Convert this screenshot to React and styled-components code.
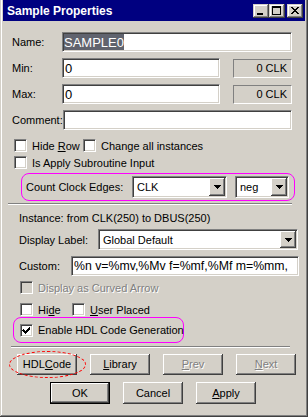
import React from 'react';
import styled, { createGlobalStyle, css } from 'styled-components';

const GlobalStyle = createGlobalStyle`
  html, body { margin: 0; padding: 0; background: #d4d0c8; }
  body { font-family: "Liberation Sans", Arial, sans-serif; font-size: 11px; color: #000; }
  * { box-sizing: border-box; }
`;

const sunken = css`
  border: 1px solid;
  border-color: #808080 #ffffff #ffffff #808080;
  box-shadow: inset 1px 1px #404040, inset -1px -1px #d4d0c8;
`;

const raised = css`
  box-shadow: inset -1px -1px #404040, inset 1px 1px #ffffff, inset -2px -2px #808080, inset 2px 2px #d4d0c8;
`;

const Window = styled.div`
  width: 308px;
  height: 417px;
  background: #d4d0c8;
  padding: 0 3px 3px 3px;
  display: flex;
  flex-direction: column;
  overflow: hidden;
  box-shadow: inset -1px -1px #404040, inset 1px 0 #d4d0c8, inset -2px -2px #808080, inset 2px 0 #ffffff;
`;

const TitleBar = styled.div`
  height: 21px;
  flex-shrink: 0;
  background: #000080;
  display: flex;
  align-items: center;
  padding: 0 2px;
  color: #fff;
  font-weight: bold;
  font-size: 12px;
`;

const Title = styled.div`
  flex: 1;
  padding-left: 2px;
`;

const CaptionButton = styled.div`
  width: 16px;
  height: 14px;
  background: #d4d0c8;
  margin-left: ${p => p.$gap || 0}px;
  box-shadow: inset -1px -1px #404040, inset 1px 1px #d4d0c8, inset -2px -2px #808080, inset 2px 2px #ffffff;
  svg { display: block; }
`;

const Section = styled.div`
  display: flex;
  flex-direction: column;
  margin-top: ${p => p.$mt || 0}px;
  padding-left: ${p => p.$pl || 0}px;
  padding-right: ${p => p.$pr || 0}px;
  gap: ${p => p.$gap || 0}px;
`;

const FieldRow = styled.div`
  display: flex;
  align-items: center;
  height: ${p => p.$h || 20}px;
  margin-top: ${p => p.$mt || 0}px;
`;

const FieldLabel = styled.label`
  width: ${p => p.$w || 50}px;
  flex-shrink: 0;
  white-space: nowrap;
`;

const TextBox = styled.div`
  ${sunken};
  background: #fff;
  height: 20px;
  width: ${p => (p.$w ? `${p.$w}px` : 'auto')};
  flex: ${p => (p.$w ? '0 0 auto' : '1')};
  display: flex;
  align-items: stretch;
  padding: 1px 1px 1px 2px;
  font-size: ${p => p.$fs || 13}px;
  white-space: nowrap;
  overflow: hidden;
  span { display: flex; align-items: center; }
`;

const Selected = styled.span`
  background: #60636e;
  color: #fff;
  margin-left: -1px;
`;

const StaticBox = styled.div`
  width: 59px;
  height: 19px;
  margin-left: 13px;
  border: 1px solid;
  border-color: #808080 #ffffff #ffffff #808080;
  display: flex;
  align-items: center;
  justify-content: flex-end;
  padding-right: 4px;
`;

const CheckRow = styled.div`
  display: flex;
  align-items: center;
  height: 13px;
  margin-top: ${p => p.$mt || 0}px;
  padding-left: ${p => p.$pl || 0}px;
`;

const Check = styled.div`
  display: flex;
  align-items: center;
  gap: 5px;
  width: ${p => (p.$w ? `${p.$w}px` : 'auto')};
  white-space: nowrap;
  color: ${p => (p.$disabled ? '#808080' : '#000')};
  text-shadow: ${p => (p.$disabled ? '1px 1px #fff' : 'none')};
`;

const Box = styled.span`
  ${sunken};
  width: 13px;
  height: 13px;
  flex-shrink: 0;
  background: ${p => (p.$disabled ? '#d4d0c8' : '#fff')};
  display: flex;
  align-items: center;
  justify-content: center;
`;

const Highlight = styled.div`
  border: 1px solid #ff00ff;
  border-radius: 8px;
  margin-top: ${p => p.$mt}px;
  margin-left: ${p => p.$ml}px;
  width: ${p => p.$w}px;
  height: ${p => p.$h}px;
  padding-left: ${p => p.$pl}px;
  display: flex;
  align-items: center;
`;

const Select = styled.div`
  ${sunken};
  background: #fff;
  height: ${p => p.$h || 21}px;
  width: ${p => p.$w}px;
  margin-left: ${p => p.$ml || 0}px;
  flex-shrink: 0;
  display: flex;
  align-items: stretch;
  padding: 1px;
`;

const SelectText = styled.span`
  flex: 1;
  display: flex;
  align-items: center;
  padding-left: 3px;
  white-space: nowrap;
`;

const DropButton = styled.span`
  width: 16px;
  background: #d4d0c8;
  ${raised};
  display: flex;
  align-items: center;
  justify-content: center;
`;

const Separator = styled.div`
  height: 2px;
  border-top: 1px solid #808080;
  border-bottom: 1px solid #ffffff;
  margin-top: ${p => p.$mt}px;
  margin-left: ${p => p.$ml}px;
  width: ${p => p.$w}px;
`;

const InfoText = styled.div`
  margin-top: ${p => p.$mt}px;
  padding-left: ${p => p.$pl}px;
  line-height: 13px;
`;

const ButtonRow = styled.div`
  display: flex;
  gap: 13px;
  margin-top: ${p => p.$mt}px;
  padding-left: ${p => p.$pl}px;
`;

const Button = styled.div`
  position: relative;
  width: 60px;
  height: ${p => p.$h || 21}px;
  background: #d4d0c8;
  display: flex;
  align-items: center;
  justify-content: center;
  padding-bottom: 1px;
  ${raised};
  color: ${p => (p.$disabled ? '#808080' : '#000')};
  text-shadow: ${p => (p.$disabled ? '1px 1px #fff' : 'none')};
  ${p => p.$default && css`
    border: 1px solid #000;
  `}
`;

const Ellipse = styled.span`
  position: absolute;
  left: -8px;
  top: -3px;
  width: 77px;
  height: 27px;
  border: 1px dashed #ff0000;
  border-radius: 50%;
  pointer-events: none;
`;

function Arrow() {
  return (
    <svg width="7" height="4" viewBox="0 0 7 4" shapeRendering="crispEdges">
      <path d="M0 0h7v1h-1v1h-1v1h-1v1h-1v-1h-1v-1h-1v-1h-1z" fill="#000" />
    </svg>
  );
}

function Tick() {
  return (
    <svg width="9" height="9" viewBox="0 0 9 9" shapeRendering="crispEdges">
      <path d="M1 3h1v1h1v1h1v-1h1v-1h1v-1h1v-1h1v3h-1v1h-1v1h-1v1h-1v1h-1v-1h-1v-1h-1v-1h-1z" fill="#000" />
    </svg>
  );
}

function CheckBox({ label, checked, disabled, w }) {
  return (
    <Check $w={w} $disabled={disabled}>
      <Box $disabled={disabled}>{checked && <Tick />}</Box>
      <span>{label}</span>
    </Check>
  );
}

function Dropdown({ value, w, h, ml }) {
  return (
    <Select $w={w} $h={h} $ml={ml}>
      <SelectText>{value}</SelectText>
      <DropButton><Arrow /></DropButton>
    </Select>
  );
}

export default function App() {
  return (
    <>
      <GlobalStyle />
      <Window>
        <TitleBar>
          <Title>Sample Properties</Title>
          <CaptionButton>
            <svg width="16" height="14" viewBox="0 0 16 14" shapeRendering="crispEdges">
              <rect x="4" y="9" width="6" height="2" fill="#000" />
            </svg>
          </CaptionButton>
          <CaptionButton>
            <svg width="16" height="14" viewBox="0 0 16 14" shapeRendering="crispEdges">
              <path d="M3 2h9v9h-9z M4 4v6h7v-6z" fill="#000" fillRule="evenodd" />
            </svg>
          </CaptionButton>
          <CaptionButton $gap={2}>
            <svg width="16" height="14" viewBox="0 0 16 14" shapeRendering="crispEdges">
              <path d="M4 3h2v1h1v1h2v-1h1v-1h2v1h-1v1h-1v1h-1v1h1v1h1v1h1v1h-2v-1h-1v-1h-2v1h-1v1h-2v-1h1v-1h1v-1h1v-1h-1v-1h-1v-1h-1z" fill="#000" />
            </svg>
          </CaptionButton>
        </TitleBar>

        <Section $mt={11} $pl={9} $pr={13} $gap={6}>
          <FieldRow>
            <FieldLabel>Name:</FieldLabel>
            <TextBox><Selected>SAMPLE0</Selected></TextBox>
          </FieldRow>
          <FieldRow>
            <FieldLabel>Min:</FieldLabel>
            <TextBox $w={158}><span>0</span></TextBox>
            <StaticBox>0 CLK</StaticBox>
          </FieldRow>
          <FieldRow>
            <FieldLabel>Max:</FieldLabel>
            <TextBox $w={158}><span>0</span></TextBox>
            <StaticBox>0 CLK</StaticBox>
          </FieldRow>
          <FieldRow>
            <FieldLabel $w={51}>Comment:</FieldLabel>
            <TextBox />
          </FieldRow>
        </Section>

        <CheckRow $mt={9} $pl={11}>
          <CheckBox w={69} label={<>Hide <u>R</u>ow</>} />
          <CheckBox label="Change all instances" />
        </CheckRow>
        <CheckRow $mt={4} $pl={11}>
          <CheckBox label="Is Apply Subroutine Input" />
        </CheckRow>

        <Highlight $mt={4} $ml={18} $w={274} $h={28} $pl={4}>
          <FieldLabel $w={106}>Count Clock Edges:</FieldLabel>
          <Dropdown value="CLK" w={95} h={22} />
          <Dropdown value="neg" w={54} h={22} ml={8} />
        </Highlight>

        <Separator $mt={2} $ml={5} $w={284} />

        <InfoText $mt={7} $pl={16}>Instance: from CLK(250) to DBUS(250)</InfoText>

        <Section $pl={16}>
          <FieldRow $mt={4} $h={21}>
            <FieldLabel $w={79}>Display Label:</FieldLabel>
            <Dropdown value="Global Default" w={200} h={21} />
          </FieldRow>
          <FieldRow $mt={6}>
            <FieldLabel $w={52}>Custom:</FieldLabel>
            <TextBox $w={228} $fs={12.3}><span>%n v=%mv,%Mv f=%mf,%Mf m=%mm,</span></TextBox>
          </FieldRow>
        </Section>

        <CheckRow $mt={5} $pl={17}>
          <CheckBox disabled label="Display as Curved Arrow" />
        </CheckRow>
        <CheckRow $mt={9} $pl={17}>
          <CheckBox w={52} label={<>Hi<u>d</u>e</>} />
          <CheckBox label={<><u>U</u>ser Placed</>} />
        </CheckRow>

        <Highlight $mt={1} $ml={10} $w={171} $h={26} $pl={6}>
          <CheckBox checked label="Enable HDL Code Generation" />
        </Highlight>

        <Separator $mt={3} $ml={8} $w={279} />

        <ButtonRow $mt={6} $pl={14}>
          <Button>HDL <u>C</u>ode<Ellipse /></Button>
          <Button><u>L</u>ibrary</Button>
          <Button $disabled><u>P</u>rev</Button>
          <Button $disabled><u>N</u>ext</Button>
        </ButtonRow>
        <ButtonRow $mt={7} $pl={47}>
          <Button $default $h={22}>OK</Button>
          <Button $h={22}>Cancel</Button>
          <Button $h={22}><u>A</u>pply</Button>
        </ButtonRow>
      </Window>
    </>
  );
}
